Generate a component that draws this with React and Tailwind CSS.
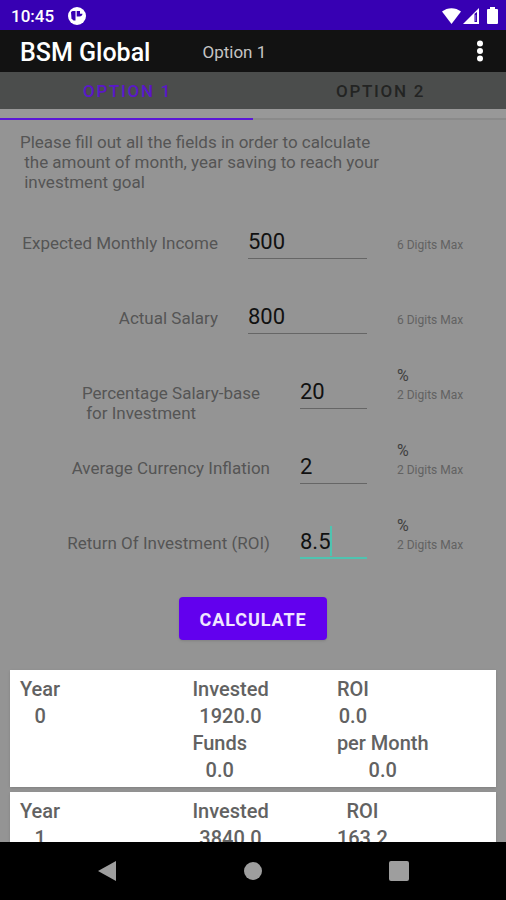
const fields = [
  { id: 'income', label: 'Expected Monthly Income', value: '500', hint: '6 Digits Max' },
  { id: 'salary', label: 'Actual Salary', value: '800', hint: '6 Digits Max' },
  {
    id: 'percentage',
    label: 'Percentage Salary-base\n for Investment',
    value: '20',
    hint: '2 Digits Max',
    percent: true,
  },
  { id: 'inflation', label: 'Average Currency Inflation', value: '2', hint: '2 Digits Max', percent: true },
  { id: 'roi', label: 'Return Of Investment (ROI)', value: '8.5', hint: '2 Digits Max', percent: true, active: true },
]

const results = [
  { year: '0', invested: '1920.0', roi: '0.0', funds: '0.0', perMonth: '0.0' },
  { year: '1', invested: '3840.0', roi: '163.2' },
]

function StatusBar() {
  return (
    <div className="flex h-[30px] shrink-0 items-center bg-[#3700b3] pt-px pr-2 pl-[11px] text-white">
      <span className="text-[17px] leading-5 font-medium">10:45</span>
      <svg className="ml-3.5 size-[18px]" viewBox="0 0 18 18">
        <circle cx="9" cy="9" r="9" fill="#fff" />
        <path d="M3 5 4.500 4H7.500v9.500H5.500L3.500 11.500z" fill="#3700b3" />
        <path d="M8.700 4h3.300v2.800h2.500q-.4 2.700-3 2.700H8.700z" fill="#3700b3" />
      </svg>
      <div className="flex-1" />
      <svg className="h-4 w-[19px]" viewBox="0 0 19 16">
        <path d="M0 3.5C5.5-1 13.500-1 19 3.500L9.500 16z" fill="#fff" />
      </svg>
      <svg className="ml-0.5 size-4" viewBox="0 0 16 16">
        <path d="M0 16 16 0v16z" fill="#fff" />
        <path d="M11.500 5.800 14 4v10h-2.500z" fill="#3700b3" />
        <path d="M12.300 7h.8v6h-.8z" fill="#8f70d4" />
      </svg>
      <svg className="ml-2 h-[17px] w-[11px]" viewBox="0 0 11 17">
        <path d="M3 0h5v2h2q1 0 1 1v13q0 1-1 1H1q-1 0-1-1V3q0-1 1-1h2z" fill="#fff" />
      </svg>
    </div>
  )
}

function AppBar() {
  return (
    <header className="flex h-[42px] shrink-0 items-center bg-[#121212] pr-4 pl-5">
      <h1 className="pt-1 text-[25px] leading-8 font-medium text-white">BSM Global</h1>
      <span className="ml-[52px] pt-1 text-[17px] text-[#c4c4c4]">Option 1</span>
      <div className="flex-1" />
      <button type="button" aria-label="More options" className="flex w-5 justify-center">
        <svg className="h-[22px] w-1.5" viewBox="0 0 6 22" fill="#fff">
          <circle cx="3" cy="3.500" r="3" />
          <circle cx="3" cy="11" r="3" />
          <circle cx="3" cy="18.500" r="3" />
        </svg>
      </button>
    </header>
  )
}

function Tabs() {
  return (
    <nav className="shrink-0">
      <div className="grid h-[37px] grid-cols-2 bg-[#4b4d4c] text-[17px] font-medium tracking-widest">
        <button type="button" className="pt-0.5 pl-0.5 text-[#5a17c9]">
          OPTION 1
        </button>
        <button type="button" className="pt-0.5 pl-0.5 text-[#232423]">
          OPTION 2
        </button>
      </div>
      <div className="flex h-[11px] items-end bg-[#989898]">
        <div className="h-[2px] w-1/2 bg-[#5b17d6]" />
        <div className="h-[2px] w-1/2 bg-[#8a8a8a]" />
      </div>
    </nav>
  )
}

function Field({ field }) {
  return (
    <div className="flex h-[75px] items-start pl-5">
      <div className="flex flex-1 justify-end gap-[30px]">
        <label
          htmlFor={field.id}
          className={`pt-[27px] text-[17px] leading-5 whitespace-pre text-[#555555] ${field.label.includes('\n') ? 'pr-2.5' : ''}`}
        >
          {field.label}
        </label>
        <div className={`relative mt-[18px] h-[35px] ${field.percent ? 'w-[67px]' : 'w-[119px]'}`}>
          <input
            id={field.id}
            defaultValue={field.value}
            className={`h-full w-full text-[22px] text-[#111111] outline-none ${
              field.active ? 'border-b-2 border-[#4fc3b0] pt-0.5' : 'border-b border-[#666666]'
            }`}
          />
          {field.active && <span className="absolute top-0.5 left-[30px] h-[30px] w-0.5 bg-[#4fc3b0]" />}
        </div>
      </div>
      <div className="ml-[30px] w-[109px] pt-2.5">
        <div className="h-5 text-base leading-5 text-[#3f3f3f]">{field.percent ? '%' : ''}</div>
        <div className="text-xs leading-[18px] text-[#626262]">{field.hint}</div>
      </div>
    </div>
  )
}

function Stat({ label, value }) {
  return (
    <div className="flex flex-col items-center">
      <span>{label}</span>
      <span>{value}</span>
    </div>
  )
}

function ResultCard({ result }) {
  return (
    <div className="grid grid-cols-[37fr_31fr_32fr] bg-white px-2.5 pt-1.5 pb-[3px] text-xl leading-[27px] font-medium text-[#626262] shadow">
      <div className="flex flex-col items-start">
        <Stat label="Year" value={result.year} />
      </div>
      <div className="flex flex-col items-start">
        <Stat label="Invested" value={result.invested} />
        {result.funds && <Stat label="Funds" value={result.funds} />}
      </div>
      <div className="flex flex-col items-start">
        <Stat label="ROI" value={result.roi} />
        {result.perMonth && <Stat label="per Month" value={result.perMonth} />}
      </div>
    </div>
  )
}

function NavigationBar() {
  return (
    <footer className="grid h-[58px] shrink-0 grid-cols-[1fr_146px_146px_146px_1fr] items-center bg-black">
      <div />
      <button type="button" aria-label="Back" className="flex justify-center">
        <svg className="h-5 w-[18px]" viewBox="0 0 18 20">
          <path d="M0 10 18 0v20z" fill="#9e9e9e" />
        </svg>
      </button>
      <button type="button" aria-label="Home" className="flex justify-center">
        <span className="size-[18px] rounded-full bg-[#9e9e9e]" />
      </button>
      <button type="button" aria-label="Recent apps" className="flex justify-center">
        <span className="size-5 rounded-xs bg-[#9e9e9e]" />
      </button>
      <div />
    </footer>
  )
}

function App() {
  return (
    <div className="flex h-screen flex-col bg-[#949494] font-[Roboto,sans-serif]">
      <StatusBar />
      <AppBar />
      <Tabs />
      <main className="min-h-0 flex-1 overflow-y-auto [scrollbar-width:none]">
        <p className="px-5 pt-3 text-[17px] leading-5 whitespace-pre text-[#555555]">
          {'Please fill out all the fields in order to calculate\n the amount of month, year saving to reach your\n investment goal'}
        </p>
        <form className="pt-[14px]">
          {fields.map((field) => (
            <Field key={field.id} field={field} />
          ))}
          <div className="flex justify-center pt-4">
            <button
              type="button"
              className="h-[43px] w-[148px] rounded bg-[#6200ee] pt-0.5 text-lg font-bold tracking-wider text-[#f0e6ff] shadow"
            >
              CALCULATE
            </button>
          </div>
        </form>
        <section className="flex flex-col gap-[5px] px-2.5 pt-[30px]">
          {results.map((result) => (
            <ResultCard key={result.year} result={result} />
          ))}
        </section>
      </main>
      <NavigationBar />
    </div>
  )
}

export default App
